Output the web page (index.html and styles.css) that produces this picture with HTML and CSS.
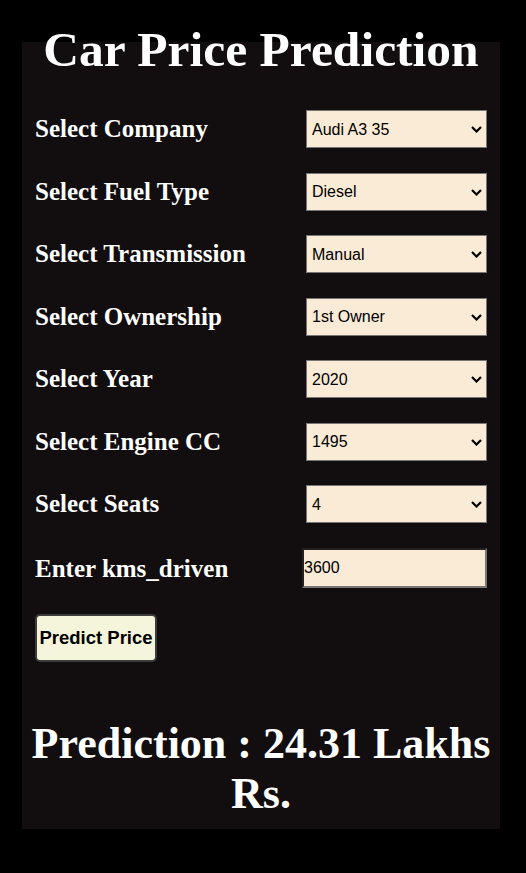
FILE: index.html
```html
<!DOCTYPE html>
<html lang="en">
<head>
<meta charset="utf-8">
<title>Car Price Prediction</title>
<link rel="stylesheet" href="styles.css">
</head>
<body>
<div class="card">
  <h1 class="title">Car Price Prediction</h1>
  <form class="form">
    <div class="row">
      <label class="label">Select Company</label>
      <span class="select-wrap"><select class="field"><option>Audi A3 35</option></select><svg class="chevron" width="11" height="7" viewBox="0 0 11 7"><polyline points="1,1 5.5,5.5 10,1" fill="none" stroke="#000" stroke-width="2.2"/></svg></span>
    </div>
    <div class="row">
      <label class="label">Select Fuel Type</label>
      <span class="select-wrap"><select class="field"><option>Diesel</option></select><svg class="chevron" width="11" height="7" viewBox="0 0 11 7"><polyline points="1,1 5.5,5.5 10,1" fill="none" stroke="#000" stroke-width="2.2"/></svg></span>
    </div>
    <div class="row">
      <label class="label">Select Transmission</label>
      <span class="select-wrap"><select class="field"><option>Manual</option></select><svg class="chevron" width="11" height="7" viewBox="0 0 11 7"><polyline points="1,1 5.5,5.5 10,1" fill="none" stroke="#000" stroke-width="2.2"/></svg></span>
    </div>
    <div class="row">
      <label class="label">Select Ownership</label>
      <span class="select-wrap"><select class="field"><option>1st Owner</option></select><svg class="chevron" width="11" height="7" viewBox="0 0 11 7"><polyline points="1,1 5.5,5.5 10,1" fill="none" stroke="#000" stroke-width="2.2"/></svg></span>
    </div>
    <div class="row">
      <label class="label">Select Year</label>
      <span class="select-wrap"><select class="field"><option>2020</option></select><svg class="chevron" width="11" height="7" viewBox="0 0 11 7"><polyline points="1,1 5.5,5.5 10,1" fill="none" stroke="#000" stroke-width="2.2"/></svg></span>
    </div>
    <div class="row">
      <label class="label">Select Engine CC</label>
      <span class="select-wrap"><select class="field"><option>1495</option></select><svg class="chevron" width="11" height="7" viewBox="0 0 11 7"><polyline points="1,1 5.5,5.5 10,1" fill="none" stroke="#000" stroke-width="2.2"/></svg></span>
    </div>
    <div class="row">
      <label class="label">Select Seats</label>
      <span class="select-wrap"><select class="field"><option>4</option></select><svg class="chevron" width="11" height="7" viewBox="0 0 11 7"><polyline points="1,1 5.5,5.5 10,1" fill="none" stroke="#000" stroke-width="2.2"/></svg></span>
    </div>
    <div class="row row-input">
      <label class="label label-input">Enter kms_driven</label>
      <input class="text-field" type="text" value="3600">
    </div>
    <button class="btn" type="button">Predict Price</button>
  </form>
  <h2 class="result">Prediction : 24.31 Lakhs Rs.</h2>
</div>
</body>
</html>
```
FILE: styles.css
```css
html, body {
  margin: 0;
  padding: 0;
  background: #000000;
}

body {
  font-family: "Liberation Serif", "Times New Roman", serif;
  color: #ffffff;
}

.card {
  display: flow-root;
  box-sizing: border-box;
  width: 478px;
  margin: 42px 0 0 22px;
  padding: 0 13px 10px;
  background: #120d0e;
}

.title {
  margin: -21px -13px 0;
  font-size: 49.5px;
  line-height: 58px;
  font-weight: bold;
  text-align: center;
  color: #ffffff;
}

.form {
  margin: 31px 0 0;
  display: flex;
  flex-direction: column;
  align-items: flex-start;
}

.row {
  display: flex;
  align-items: center;
  justify-content: space-between;
  align-self: stretch;
  height: 38px;
  margin-bottom: 24.5px;
}

.row-input {
  height: 40px;
  margin-bottom: 26px;
}

.label {
  font-size: 25px;
  font-weight: bold;
  color: #ffffff;
}

.label-input {
  padding-top: 2px;
}

.select-wrap {
  position: relative;
  display: block;
  width: 181px;
  height: 38px;
}

.field {
  display: block;
  box-sizing: border-box;
  width: 181px;
  height: 38px;
  -webkit-appearance: none;
  appearance: none;
  background-color: #faebd7;
  border: 1px solid #767676;
  border-radius: 0;
  font-family: "Liberation Sans", Arial, sans-serif;
  font-size: 16px;
  color: #000000;
  padding: 0 20px 0 5px;
  margin: 0;
}

.chevron {
  position: absolute;
  right: 5px;
  top: 16px;
  pointer-events: none;
}

.text-field {
  box-sizing: border-box;
  width: 185px;
  height: 40px;
  padding: 0;
  background-color: #faebd7;
  border: 2px inset #767676;
  font-family: "Liberation Sans", Arial, sans-serif;
  font-size: 16px;
  color: #000000;
}

.btn {
  box-sizing: border-box;
  width: 122px;
  height: 48px;
  padding: 0;
  background: #f5f5dc;
  border: 2px solid #3c3c3c;
  border-radius: 5px;
  font-family: "Liberation Sans", Arial, sans-serif;
  font-size: 18.5px;
  font-weight: bold;
  color: #000000;
}

.result {
  margin: 57px -13px 0;
  font-size: 44px;
  line-height: 50px;
  font-weight: bold;
  text-align: center;
  color: #ffffff;
}
```
